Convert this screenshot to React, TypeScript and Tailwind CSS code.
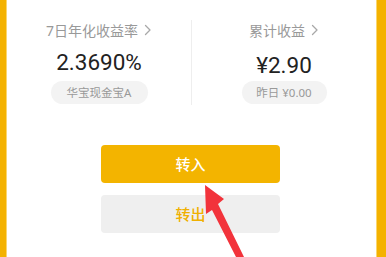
import React from 'react';

const font = { fontFamily: '"Noto Sans", "Noto Sans CJK SC", sans-serif' };

const Chevron: React.FC = () => (
  <svg width="8" height="12" viewBox="0 0 8 12" className="ml-[6px] inline-block">
    <path d="M1.5 1.5 L6 6 L1.5 10.5" fill="none" stroke="#a8a8a8" strokeWidth="1.3" strokeLinecap="round" strokeLinejoin="round" />
  </svg>
);

const Stat: React.FC<{ label: string; value: string; pill: string; pillW: string; valueOffset: string }> = ({
  label,
  value,
  pill,
  pillW,
  valueOffset,
}) => (
  <div className="flex-1 flex flex-col items-center">
    <div className="h-[20px] flex items-center text-[14px] text-[#999999]">
      {label}
      <Chevron />
    </div>
    <div
      className={`h-[30px] flex items-center text-[22.5px] leading-none text-[#222222] font-['Roboto','Noto_Sans_CJK_SC',sans-serif] ${valueOffset}`}
    >
      {value}
    </div>
    <div className={`h-[23px] ${pillW} rounded-full bg-[#f3f3f3] flex items-center justify-center text-[11.5px] text-[#999999]`}>
      {pill}
    </div>
  </div>
);

export default function App() {
  return (
    <div className="relative w-[386px] h-[257px] flex overflow-hidden" style={font}>
      <div className="w-[6px] bg-[#f4b200]" />
      <div className="w-[1px] bg-[#fbd66e]" />
      <div className="flex-1 bg-white flex flex-col">
        <div className="flex items-start pt-[20px]">
          <Stat label="7日年化收益率" value="2.3690%" pill="华宝现金宝A" pillW="w-[97px] mt-[4px]" valueOffset="mt-[7px]" />
          <div className="w-[1px] h-[85px] bg-[#eeeeee]" />
          <Stat label="累计收益" value="¥2.90" pill="昨日 ¥0.00" pillW="w-[85px] mt-[1px]" valueOffset="mt-[10px]" />
        </div>
        <div className="mt-[40px] ml-[94px] w-[179px] flex flex-col gap-[12px]">
          <button className="h-[38px] rounded-[4px] bg-[#f3b400] text-white text-[15px] font-medium">转入</button>
          <button className="h-[38px] rounded-[4px] bg-[#efefef] text-[#f0b000] text-[15px] font-medium">转出</button>
        </div>
      </div>
      <div className="w-[1px] bg-[#fbd66e]" />
      <div className="w-[9px] bg-[#f4b200]" />
      <svg className="absolute left-0 top-0" width="386" height="257" viewBox="0 0 386 257">
        <polygon points="205,185 224,199 218,204 244,257 236,257 212,210 206,214" fill="#f2333b" />
      </svg>
    </div>
  );
}
